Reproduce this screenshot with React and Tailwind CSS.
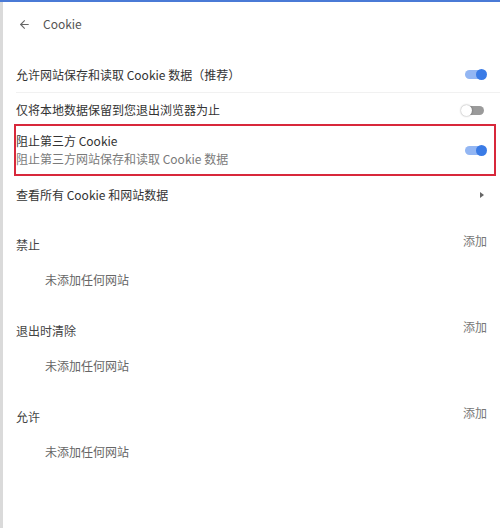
import { ArrowLeft } from "lucide-react";

function Toggle({ on }) {
  return (
    <div className="relative w-[26px] h-[12px] shrink-0">
      <div
        className={`absolute left-[4px] right-[3px] top-[1.5px] h-[9px] rounded-full ${
          on ? "bg-[#93b6f3]" : "bg-[#9a9a9a]"
        }`}
      />
      <div
        className={`absolute top-[0.5px] w-[11px] h-[11px] rounded-full ${
          on ? "right-0 bg-[#3a7be6]" : "left-0 bg-white shadow-[0_0_2px_rgba(0,0,0,0.45)]"
        }`}
      />
    </div>
  );
}

function Section({ label }) {
  return (
    <div className="pr-[13px]">
      <div className="flex justify-between items-start">
        <div className="mt-[4px] leading-[18px] text-[#444]">{label}</div>
        <div className="leading-[18px] text-[#777]">添加</div>
      </div>
      <div className="pl-[29px] mt-[17px] leading-[18px] text-[#666]">未添加任何网站</div>
    </div>
  );
}

export default function App() {
  return (
    <div
      className="w-[500px] h-[528px] bg-white text-[12px] text-[#333] overflow-hidden"
      style={{ fontFamily: '"Noto Sans CJK SC", "Noto Sans", sans-serif' }}
    >
      <div className="h-[2px] bg-[#4a7ad6]" />
      <div className="h-[526px] border-l-[3px] border-[#dadada]">
        {/* header */}
        <div className="h-[44px] flex items-center pl-[15px]">
          <ArrowLeft className="w-[13px] h-[13px] text-[#666]" strokeWidth={2} />
          <span className="ml-[12px] text-[#555]">Cookie</span>
        </div>

        <div className="mt-[11px] pl-[13px]">
          <div className="h-[36px] flex items-center justify-between pr-[13px] border-b border-[#f1f1f1]">
            <span>允许网站保存和读取 Cookie 数据（推荐）</span>
            <Toggle on />
          </div>
          <div className="h-[31px] pt-[3px] flex items-center justify-between pr-[13px]">
            <span>仅将本地数据保留到您退出浏览器为止</span>
            <Toggle on={false} />
          </div>
        </div>

        {/* highlighted row */}
        <div className="ml-[11px] mr-[4px] h-[52px] border-2 border-[#d8283b] flex items-center justify-between pr-[7px]">
          <div className="flex flex-col">
            <span className="leading-[18px]">阻止第三方 Cookie</span>
            <span className="leading-[18px] text-[#7a7a7a]">阻止第三方网站保存和读取 Cookie 数据</span>
          </div>
          <Toggle on />
        </div>

        <div className="pl-[13px]">
          <div className="h-[38px] flex items-center justify-between pr-[16px]">
            <span>查看所有 Cookie 和网站数据</span>
            <svg width="4" height="6" viewBox="0 0 4 6">
              <path d="M0 0 L4 3 L0 6 Z" fill="#666" />
            </svg>
          </div>

          <div className="pt-[18px] flex flex-col gap-[29px]">
            <Section label="禁止" />
            <Section label="退出时清除" />
            <Section label="允许" />
          </div>
        </div>
      </div>
    </div>
  );
}
